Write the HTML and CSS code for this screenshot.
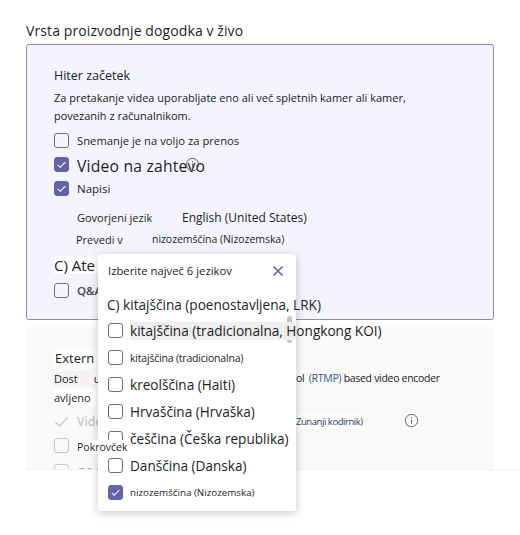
FILE: index.html
```html
<!DOCTYPE html>
<html lang="sl">
<head>
<meta charset="utf-8">
<title>Vrsta proizvodnje dogodka v živo</title>
<link rel="stylesheet" href="styles.css">
</head>
<body>
<main class="page">
  <h1 class="heading">Vrsta proizvodnje dogodka v živo</h1>
  <section class="card card-active">
    <h2 class="card-title">Hiter začetek</h2>
    <p class="desc">Za pretakanje videa uporabljate eno ali več spletnih kamer ali kamer,<br>povezanih z računalnikom.</p>
    <div class="check-row row-rec"><span class="box"></span><span class="t13 rec">Snemanje je na voljo za prenos</span></div>
    <div class="check-row row-vod"><span class="box on"><svg viewBox="0 0 14 14"><path d="M3 7.300l2.700 2.700L11 4.400"/></svg></span><span class="t16">Video na zahtevo</span>
      <svg class="info info-vod" viewBox="0 0 16 16"><circle cx="8" cy="8" r="6.600"/><path d="M8 7v4.400M8 4.300v1.200"/></svg>
    </div>
    <div class="check-row row-cap"><span class="box on"><svg viewBox="0 0 14 14"><path d="M3 7.300l2.700 2.700L11 4.400"/></svg></span><span class="t13">Napisi</span></div>
    <div class="lang-row lang-spoken"><span class="lang-label">Govorjeni jezik</span><span>English (United States)</span></div>
    <div class="lang-row lang-trans"><span class="lang-label2">Prevedi v</span><span class="t-narrow">nizozemščina (Nizozemska)</span></div>
    <div class="ate"><span class="patch ate-patch">C) Ate</span></div>
    <div class="check-row row-qa"><span class="box"></span><span class="t13 bold">Q&amp;A</span></div>
  </section>
  <section class="card card-muted">
    <h2 class="ext-title"><span class="patch ext-patch">Extern</span></h2>
    <p class="ext-desc"><span class="dost">Dost</span><span class="gap1">u</span><span class="rtmp">ol <span class="blue">(RTMP)</span> based video encoder</span><br><span class="patch avl-patch">avljeno</span></p>
    <div class="ext-row">
      <svg class="tick" viewBox="0 0 16 16"><path d="M1.500 8.500l4.500 4.500L14.500 3.500"/></svg>
      <span class="vide">Vide</span>
      <span class="zunanji">Zunanji kodirnik)</span>
      <svg class="info info-ext" viewBox="0 0 16 16"><circle cx="8" cy="8" r="6.600"/><path d="M8 7v4.400M8 4.300v1.200"/></svg>
    </div>
    <div class="check-row row-cover"><span class="box dim"></span><span class="cover">Pokrovček</span></div>
    <div class="check-row row-last"><span class="box dim"></span><span class="t13 faded bold">Q&amp;A</span></div>
  </section>
  <div class="rule"></div>
</main>
<aside class="popup">
  <header class="popup-head"><span>Izberite največ 6 jezikov</span><svg class="close" viewBox="0 0 12 12"><path d="M1.500 1.500l9 9M10.500 1.500l-9 9"/></svg></header>
  <div class="opt opt-plain">C) kitajščina (poenostavljena, LRK)</div>
  <div class="opt opt-hover"><span class="box"></span><span class="hl">kitajščina (tradicionalna, Hongkong KOI)</span></div>
  <div class="opt"><span class="box"></span><span class="small tight">kitajščina (tradicionalna)</span></div>
  <div class="opt"><span class="box"></span><span>kreolščina (Haiti)</span></div>
  <div class="opt"><span class="box"></span><span>Hrvaščina (Hrvaška)</span></div>
  <div class="opt"><span class="box"></span><span>češčina (Češka republika)</span></div>
  <div class="opt"><span class="box"></span><span>Danščina (Danska)</span></div>
  <div class="opt"><span class="box on"><svg viewBox="0 0 14 14"><path d="M3 7.300l2.700 2.700L11 4.400"/></svg></span><span class="small last-lang">nizozemščina (Nizozemska)</span></div>
  <div class="thumb"></div>
</aside>
</body>
</html>
```
FILE: styles.css
```css
* { box-sizing: border-box; }
html, body { margin: 0; height: 535px; overflow: hidden; background: #fff; }
body { font-family: "Open Sans", "Noto Sans", "Liberation Sans", sans-serif; color: #201f1e; position: relative; }
h1, h2, p { margin: 0; font-weight: 400; }
.page { padding: 21px 0 0 26px; width: 520px; }
.heading { font-size: 14px; line-height: 20px; height: 23px; letter-spacing: .1px; }
.card { width: 468px; }
.card-active { height: 276px; border: 1px solid #8b8cc7; border-radius: 3px; background: #f3f4fd; padding: 22px 0 0 27px; }
.card-title { font-size: 12.500px; line-height: 18px; height: 21px; }
.desc { font-size: 11px; line-height: 18px; height: 43px; padding-top: 1px; color: #1a1a1a; }
.check-row { display: flex; align-items: center; }
.box { flex: none; width: 15px; height: 15px; border: 1px solid #6f6f6f; border-radius: 3px; background: transparent; display: flex; }
.box.on { background: #6264a7; border-color: #6264a7; }
.box svg { width: 13px; height: 13px; fill: none; stroke: #fff; stroke-width: 1.100; }
.box.dim { border-color: #c8c6c4; }
.t13 { font-size: 11.500px; margin-left: 8px; }
.rec { font-size: 11.250px; }
.t16 { font-size: 15.700px; margin-left: 8px; padding-top: 4px; letter-spacing: .2px; }
.bold { font-weight: 600; color: #484644; }
.row-rec { height: 18px; }
.row-vod { height: 20px; margin-top: 5px; position: relative; }
.row-cap { height: 18px; margin-top: 5px; }
.info { fill: none; stroke: #616161; stroke-width: 1; }
.info-vod { position: absolute; left: 131px; top: 3px; width: 15px; height: 15px; }
.lang-row { display: flex; font-size: 12px; }
.lang-spoken { margin-top: 11px; margin-left: 23px; height: 18px; align-items: center; }
.lang-label { width: 105px; font-size: 11px; }
.lang-trans { margin-top: 4px; margin-left: 22px; height: 18px; align-items: center; }
.lang-label2 { width: 76px; font-size: 11px; }
.t-narrow { font-size: 10.500px; letter-spacing: -.05px; }
.ate { margin-top: 8px; font-size: 15px; line-height: 18px; height: 21px; }
.patch { background: #fff; }
.ate-patch { display: inline-block; padding-right: 8px; }
.row-qa { margin-top: 4px; height: 18px; }
.card-muted { height: 143px; margin-top: 7px; background: #faf9f8; border-radius: 3px 3px 0 0; padding: 22px 0 0 28px; overflow: hidden; }
.ext-title { font-size: 13px; line-height: 18px; height: 20px; }
.ext-patch { display: inline-block; padding: 0 5px 0 1px; }
.avl-patch { display: inline-block; padding-right: 8px; line-height: 17px; }
.ext-desc { font-size: 11px; line-height: 19px; height: 43px; position: relative; }
.dost { background: #f3f2f1; padding-right: 12px; }
.gap1 { margin-left: 4px; }
.rtmp { position: absolute; left: 242px; top: 0; white-space: nowrap; color: #1a1a1a; font-size: 10.500px; letter-spacing: -.3px; }
.blue { color: #2b5a8f; margin-left: 2px; }
.ext-row { height: 18px; position: relative; display: flex; align-items: center; }
.tick { width: 15px; height: 15px; fill: none; stroke: #c8c6c4; stroke-width: 1.300; }
.vide { margin-left: 8px; font-size: 12px; font-weight: 600; color: #c8c6c4; }
.zunanji { position: absolute; left: 242px; font-size: 9.500px; letter-spacing: -.45px; background: #fff; color: #1f3a5f; white-space: nowrap; }
.info-ext { position: absolute; left: 350px; top: 1px; width: 15px; height: 15px; }
.row-cover { margin-top: 6px; height: 18px; }
.cover { margin-left: 8px; padding-top: 4px; font-size: 10.500px; background: #fff content-box; position: relative; z-index: 3; }
.row-last { margin-top: 8px; height: 18px; }
.faded { color: #a19f9d; }
.rule { position: absolute; left: 26px; right: 0; top: 469px; height: 1px; background: #f0f0f0; }
.popup { position: absolute; left: 98px; top: 254px; width: 198px; height: 257px; background: #fff; border-radius: 3px; box-shadow: 0 2px 10px rgba(0,0,0,.22); padding: 0 0 0 10px; z-index: 2; }
.popup-head { display: flex; align-items: center; justify-content: space-between; height: 33px; padding: 0 12px 0 0; font-size: 11.300px; }
.close { width: 12px; height: 12px; fill: none; stroke: #6264a7; stroke-width: 1.600; }
.opt { display: flex; align-items: center; gap: 7px; height: 27px; font-size: 13.600px; white-space: nowrap; color: #201f1e; }
.opt-plain { height: 26px; margin: 4px 0 0 -1px; }
.hl { display: block; position: relative; z-index: 1; line-height: 18px; background: linear-gradient(#eee, #eee) no-repeat 0 0 / 166px 100%; }
.small { font-size: 10.500px; }
.tight { letter-spacing: -.2px; }
.last-lang { font-size: 9.800px; }
.thumb { position: absolute; left: 189px; top: 62px; width: 5px; height: 27px; background: #c8c6c4; border-radius: 3px; }
```
